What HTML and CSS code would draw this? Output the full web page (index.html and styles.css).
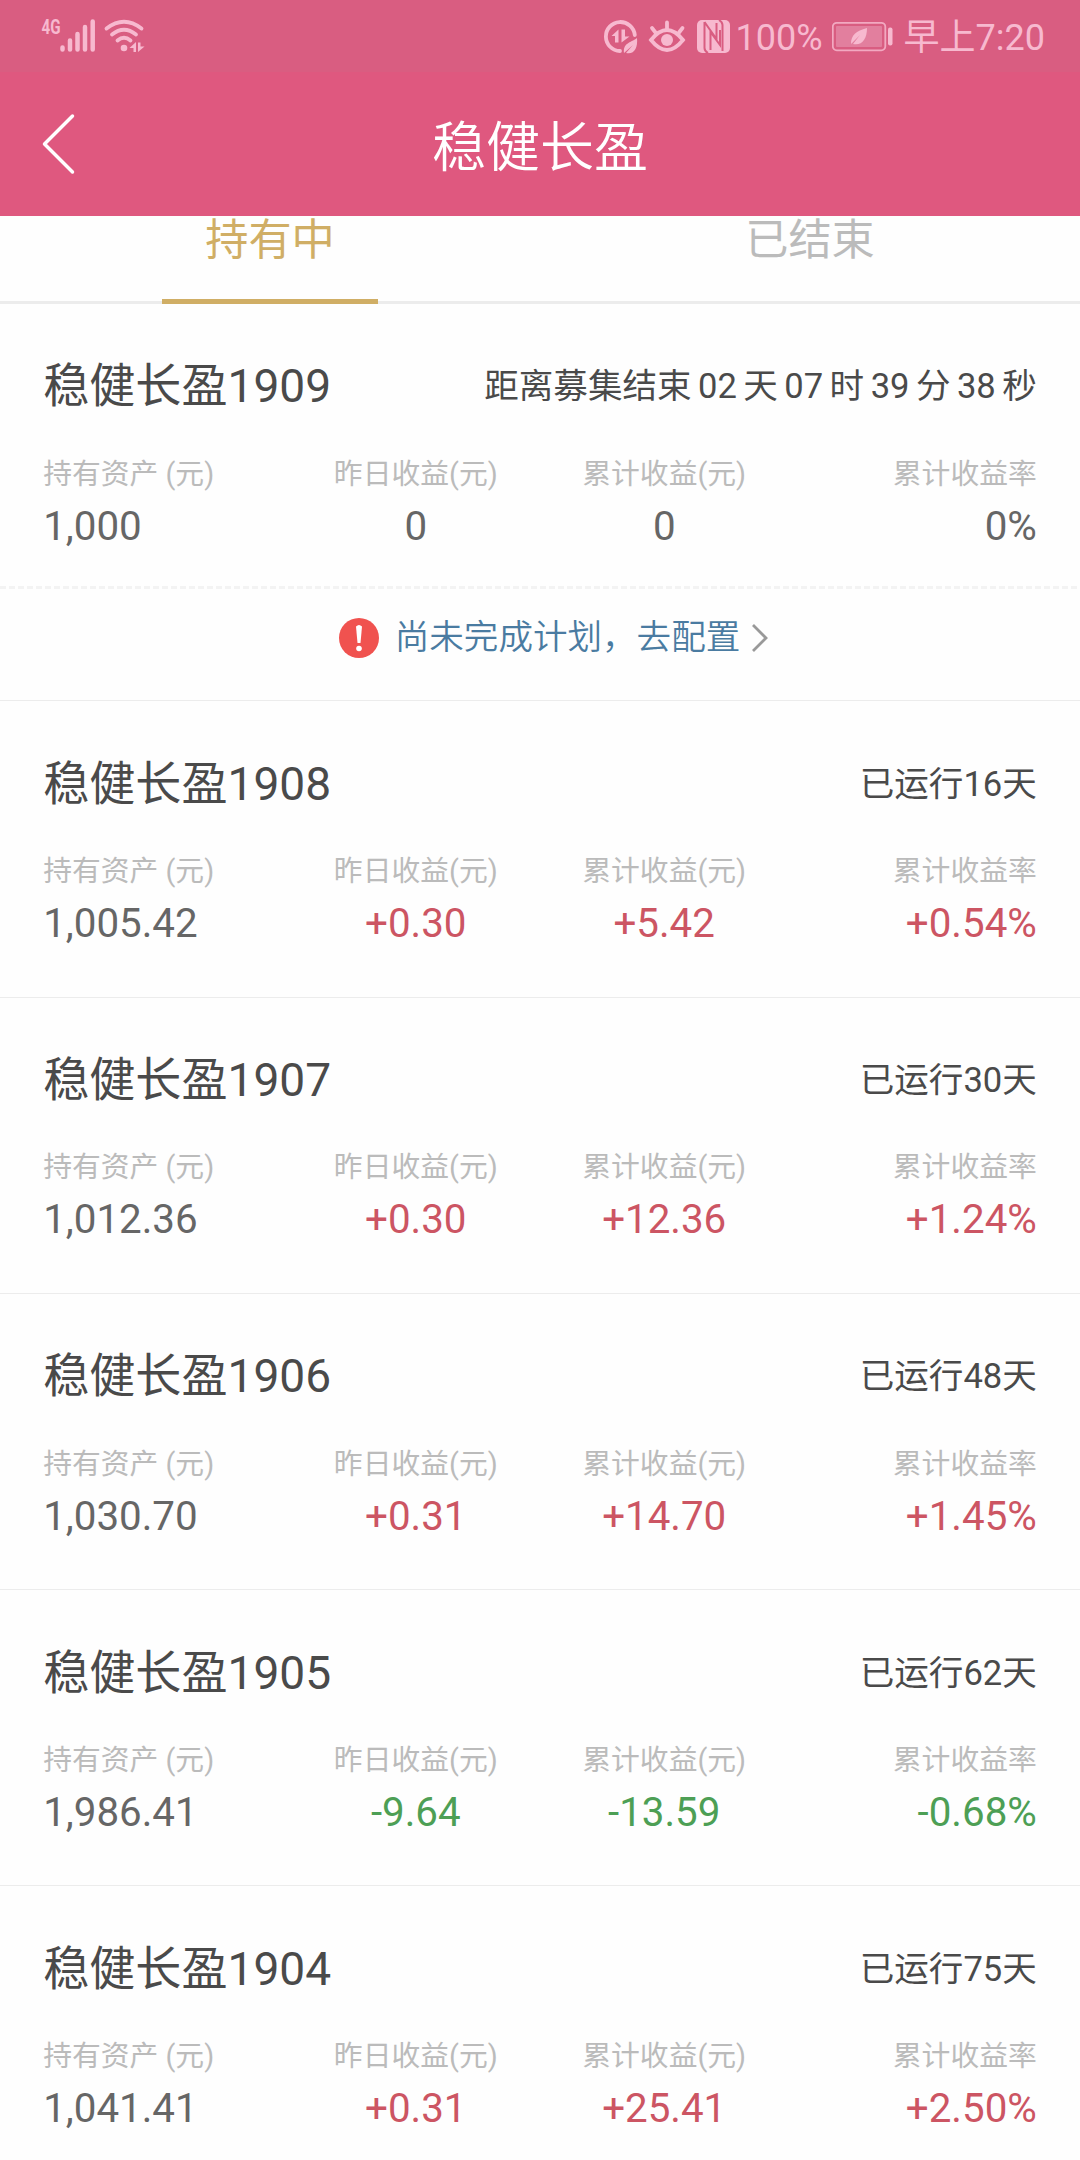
FILE: index.html
```
<!DOCTYPE html>
<html lang="zh-CN">
<head>
  <meta charset="UTF-8" />
  <meta name="viewport" content="width=device-width, initial-scale=1.0"/>
  <title>稳健长盈</title>
  <link rel="stylesheet" href="styles.css">
</head>
<body>
  <div class="status-bar">
    <svg class="signal" width="110" height="72" viewBox="40 0 110 72">
      <text x="41.5" y="34" textLength="19" lengthAdjust="spacingAndGlyphs">4G</text>
      <g class="bars">
        <path d="M62.5 47.5v2M70 40.5v9M77.500 34v15.500M85 27v22.500M92.700 21.500v28"/>
      </g>
      <g class="waves">
        <path d="M106.500 28.500Q124 15 141.500 28.500M112 34.500Q124 25 136 34.500M117.500 40.500Q124 35 130.500 40.500"/>
      </g>
      <circle cx="124" cy="48" r="3.300"/>
      <path d="M129.500 48l6.500-6v10h-2.500v-4zM138 42.500h2.500v4h4l-6.500 5.500z"/>
    </svg>

    <div class="status-right">
      <svg class="icons" width="130" height="72" viewBox="602 0 130 72">
        <path class="ring" d="M620 51A14.500 14.500 0 1 1 634.800 35"/>
        <path d="M611.500 36l7-6.500v13h-3.500v-6.500zM621.500 29.500h3.500v7h4.500l-8 6z"/>
        <path d="M624 53c-1-10 6-10 13-15c1 10-3 17-11 15l7-8z"/>
        <path class="eye" d="M651 40Q667 20 683 40Q667 60 651 40z"/>
        <circle cx="667" cy="40" r="6"/>
        <path class="lash" d="M667 22.500v6M652 28l3.500 4.500M682.500 28l-3.500 4.500"/>
        <rect x="697" y="20" width="33" height="33" rx="5"/>
        <path class="nfc" d="M704.500 22v26q0 3 3.500 5M722.500 51V25q0-3-3.500-5M710.500 50V32l9.500 13V30M704.500 22l12 17V23"/>
      </svg>
      <span class="percent">100%</span>
      <svg class="battery" width="62" height="72" viewBox="832 0 62 72">
        <rect class="case" x="832.800" y="22.800" width="52.500" height="27.500" rx="4"/>
        <rect class="level" x="836" y="26" width="46" height="21" rx="1"/>
        <path d="M851 44c0-9 5-13 16-16c0 11-5 18-14 16l7-9z"/>
        <rect x="888" y="27.500" width="4.500" height="18" rx="2"/>
      </svg>
      <span class="time">早上7:20</span>
    </div>
  </div>

  <header class="header">
    <svg class="back" width="34" height="62" viewBox="0 0 34 62">
      <path d="M30.500 3L2.500 31l28 28"/>
    </svg>
    <h1>稳健长盈</h1>
  </header>

  <nav class="tabs">
    <a class="tab active">持有中</a>
    <a class="tab">已结束</a>
  </nav>

  <main id="productList"></main>

  <script>
    const products = [
      { name: "稳健长盈1909", state: "距离募集结束 02 天 07 时 39 分 38 秒", values: ["1,000", "0", "0", "0%"], pending: true },
      { name: "稳健长盈1908", state: "已运行16天", values: ["1,005.42", "+0.30", "+5.42", "+0.54%"] },
      { name: "稳健长盈1907", state: "已运行30天", values: ["1,012.36", "+0.30", "+12.36", "+1.24%"] },
      { name: "稳健长盈1906", state: "已运行48天", values: ["1,030.70", "+0.31", "+14.70", "+1.45%"] },
      { name: "稳健长盈1905", state: "已运行62天", values: ["1,986.41", "-9.64", "-13.59", "-0.68%"] },
      { name: "稳健长盈1904", state: "已运行75天", values: ["1,041.41", "+0.31", "+25.41", "+2.50%"] }
    ];
    const labels = ["持有资产 (元)", "昨日收益(元)", "累计收益(元)", "累计收益率"];

    // red for gains, green for losses
    function valueClass(value) {
      if (value.startsWith("+")) return "value up";
      if (value.startsWith("-")) return "value down";
      return "value";
    }

    const planLink = `
      <a class="plan">
        <svg width="40" height="40" viewBox="0 0 40 40">
          <circle cx="20" cy="20" r="20" fill="#f0524f"/>
          <path d="M17 8.500Q20 5.500 23 8.500L21.500 25h-3z" fill="#fff"/>
          <circle cx="20" cy="30.500" r="2.800" fill="#fff"/>
        </svg>
        <span>尚未完成计划，去配置</span>
        <svg class="arrow" width="18" height="30" viewBox="0 0 18 30">
          <path d="M2 2l13 13L2 28"/>
        </svg>
      </a>`;

    document.getElementById("productList").innerHTML = products.map(product => `
      <section class="product">
        <div class="info">
          <div class="title-row">
            <h2>${product.name}</h2>
            <span class="state">${product.state}</span>
          </div>
          <div class="figures">
            ${product.values.map((value, i) => `
              <div class="figure">
                <div class="label">${labels[i]}</div>
                <div class="${valueClass(value)}">${value}</div>
              </div>`).join("")}
          </div>
        </div>
        ${product.pending ? planLink : ""}
      </section>`).join("");
  </script>
</body>
</html>
```
FILE: styles.css
```
* {
  box-sizing: border-box;
}
body {
  margin: 0;
  height: 2160px;
  overflow: hidden;
  background-color: #fefefe;
  color: #4a4a4a;
  font-family: Roboto, "Noto Sans CJK SC", sans-serif;
}
h1, h2 {
  margin: 0;
  font-weight: 400;
}

/* status bar */
.status-bar {
  display: flex;
  justify-content: space-between;
  height: 72px;
  padding: 0 35px 0 40px;
  background-color: #d95d81;
  color: #f7b9cf;
  fill: #f7b9cf;
}
.signal text {
  font-size: 21px;
  font-weight: 700;
}
.bars, .waves, .ring, .eye, .lash {
  fill: none;
  stroke: #f7b9cf;
  stroke-width: 4.5;
  stroke-linecap: round;
}
.waves, .ring, .eye, .lash {
  stroke-width: 3.8;
}
.nfc {
  fill: none;
  stroke: #d95d81;
  stroke-width: 2;
}
.status-right {
  display: flex;
  font-size: 36px;
  line-height: 76px;
}
.percent {
  margin: 0 9px 0 4px;
}
.battery {
  margin-right: 10px;
}
.case {
  fill: none;
  stroke: #f2a9c1;
  stroke-width: 1.8;
}
.level {
  fill: #e27f9e;
}

/* page header */
.header {
  display: flex;
  align-items: center;
  height: 144px;
  padding: 0 42px;
  background-color: #df587f;
}
.back {
  fill: none;
  stroke: #fff;
  stroke-width: 3.5;
  stroke-linecap: round;
  stroke-linejoin: round;
}
.header h1 {
  flex: 1;
  padding: 10px 34px 0 0;
  color: #fff;
  font-size: 54px;
  font-weight: 350;
  line-height: 60px;
  text-align: center;
}

/* tabs */
.tabs {
  display: flex;
  height: 88px;
  border-bottom: 3px solid #ececec;
}
.tab {
  width: 216px;
  height: 88px;
  margin: 0 162px;
  color: #bbb;
  font-size: 43.2px;
  line-height: 50px;
  text-align: center;
}
.tab.active {
  border-bottom: 5px solid #d0ae65;
  color: #d0ae65;
}

/* product list */
.product {
  border-bottom: 1px solid #ececec;
}
.info {
  height: 295.3px;
  padding: 59.4px 43.2px 0;
}
.title-row {
  display: flex;
  align-items: center;
  justify-content: space-between;
  height: 47px;
}
.title-row h2 {
  font-size: 46.08px;
  line-height: 47px;
}
.state {
  font-size: 34.56px;
  line-height: 47px;
  word-spacing: -2.1px;
}
.figures {
  display: grid;
  grid-template-columns: repeat(4, 1fr);
  margin-top: 43.4px;
}
.figure {
  text-align: center;
}
.figure:first-child {
  text-align: left;
}
.figure:last-child {
  text-align: right;
}
.label {
  color: #bbb;
  font-size: 28.8px;
  line-height: 40px;
}
.value {
  margin-top: 11px;
  color: #666;
  font-size: 40.32px;
  line-height: 44px;
}
.value.up {
  color: #cc5563;
}
.value.down {
  color: #4d9f55;
}

/* unfinished plan notice */
.plan {
  display: flex;
  align-items: center;
  justify-content: center;
  height: 114px;
  margin-top: -13px;
  padding: 0 0 10px 28px;
  background: repeating-linear-gradient(90deg, #f3f3f3 0 6px, transparent 6px 9px) top / 100% 3px no-repeat;
  color: #4a7ba1;
  font-size: 34.56px;
  font-weight: 350;
  line-height: 48px;
}
.plan span {
  margin: 0 11px 2px 16px;
}
.arrow {
  fill: none;
  stroke: #999;
  stroke-width: 2.8;
}
```
